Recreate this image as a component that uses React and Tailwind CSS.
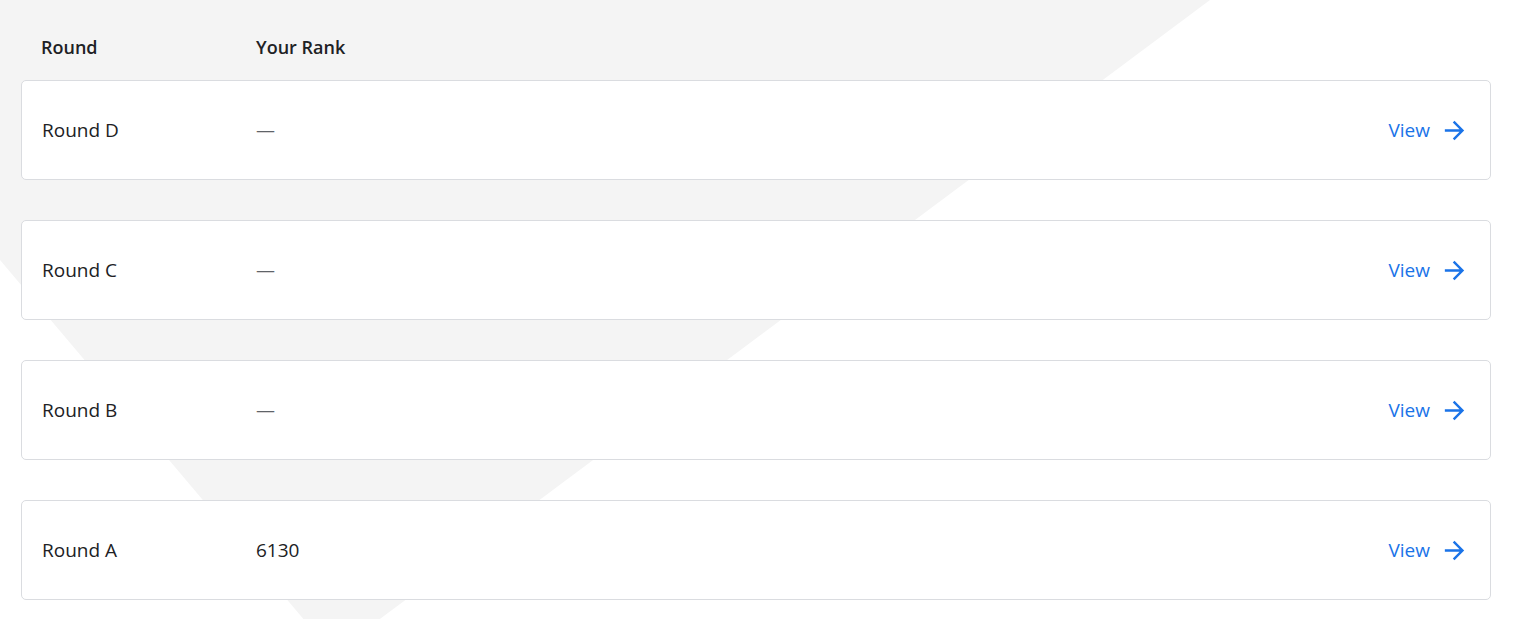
import React from 'react';

const rounds = [
  { name: 'Round D', rank: null },
  { name: 'Round C', rank: null },
  { name: 'Round B', rank: null },
  { name: 'Round A', rank: '6130' },
];

function ArrowForward() {
  return (
    <svg width="29" height="29" viewBox="0 0 24 24" fill="#1a73e8" aria-hidden="true">
      <path d="M12 4l-1.41 1.41L16.17 11H4v2h12.17l-5.58 5.59L12 20l8-8z" />
    </svg>
  );
}

function RoundRow({ name, rank }) {
  return (
    <div className="h-[100px] bg-white border border-[#dadce0] rounded-[5px] flex items-center pl-[20px] pr-[21px]">
      <div className="w-[214px] text-[19px] text-[#202124]">{name}</div>
      <div className={`flex-1 text-[19px] ${rank ? 'text-[#202124]' : 'text-[#5f6368]'}`}>
        {rank ?? '—'}
      </div>
      <button className="flex items-center gap-[10px] text-[19px] text-[#1a73e8]">
        <span>View</span>
        <ArrowForward />
      </button>
    </div>
  );
}

export default function App() {
  return (
    <div
      className="relative w-full h-[619px] overflow-hidden bg-white"
      style={{ fontFamily: '"Open Sans", Roboto, Arial, sans-serif' }}
    >
      {/* background chevron */}
      <svg
        className="absolute inset-0 pointer-events-none"
        width="1516"
        height="619"
        viewBox="0 0 1516 619"
        aria-hidden="true"
      >
        <polygon points="0,0 1210,0 333,654 0,260" fill="#f4f4f4" />
      </svg>

      <div className="relative pl-[21px] pr-[25px] pt-[35px]">
        <div className="flex items-center h-[24px] pl-[20px] mb-[21px] text-[18px] font-semibold text-[#202124]">
          <div className="w-[215px]">Round</div>
          <div>Your Rank</div>
        </div>
        <div className="flex flex-col gap-[40px]">
          {rounds.map((r) => (
            <RoundRow key={r.name} {...r} />
          ))}
        </div>
      </div>
    </div>
  );
}
